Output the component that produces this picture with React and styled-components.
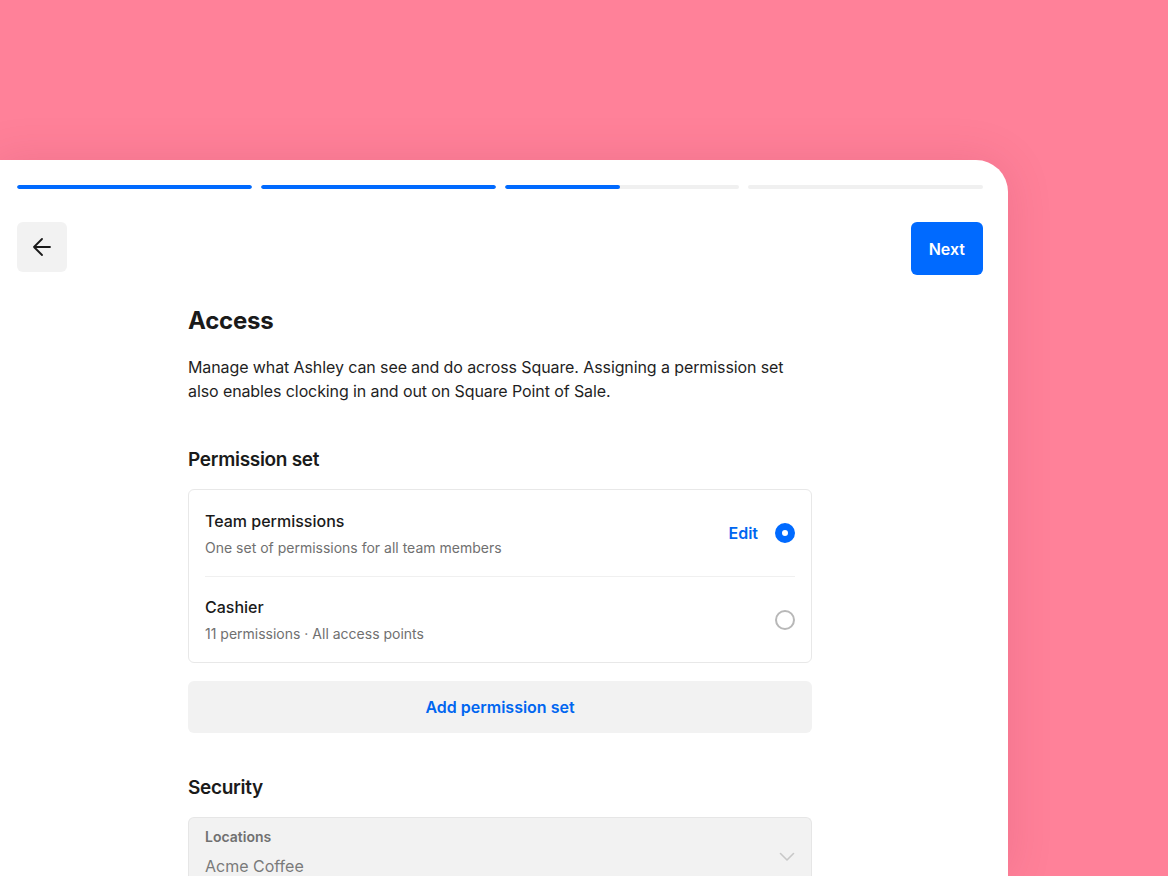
import React from 'react'
import styled, { createGlobalStyle } from 'styled-components'

const GlobalStyle = createGlobalStyle`
  html, body {
    margin: 0;
    padding: 0;
    height: 100%;
    overflow: hidden;
  }
  body {
    background: #ff8199;
    font-family: Inter, "Noto Sans", "Liberation Sans", sans-serif;
    color: #1a1a1a;
    -webkit-font-smoothing: antialiased;
  }
`

const Page = styled.div`
  height: 876px;
  padding-top: 160px;
  box-sizing: border-box;
  overflow: hidden;
`

const Sheet = styled.div`
  width: 1016px;
  height: 716px;
  margin-left: -8px;
  box-sizing: border-box;
  padding: 25px 25px 0;
  background: #fff;
  border-top-right-radius: 32px;
  box-shadow: 0 0 48px rgba(120, 20, 50, 0.12);
`

const Progress = styled.div`
  display: grid;
  grid-template-columns: repeat(4, 1fr);
  gap: 9px;
`

const Track = styled.div`
  height: 4px;
  border-radius: 2px;
  background: #f0f0f0;
  overflow: hidden;
`

const Fill = styled.div`
  height: 100%;
  border-radius: 2px;
  background: #006aff;
`

const Header = styled.div`
  display: flex;
  justify-content: space-between;
  align-items: flex-start;
  margin-top: 33px;
`

const BackButton = styled.button`
  width: 50px;
  height: 50px;
  border: 0;
  border-radius: 6px;
  background: #f2f2f2;
  display: flex;
  align-items: center;
  justify-content: center;
  padding: 0;
`

const NextButton = styled.button`
  height: 53px;
  padding: 0 18px;
  border: 0;
  border-radius: 6px;
  background: #006aff;
  color: #fff;
  font-family: inherit;
  font-size: 16px;
  font-weight: 600;
`

const Content = styled.div`
  width: 624px;
  margin: 30px auto 0;
`

const Title = styled.h1`
  margin: 0;
  font-size: 24px;
  line-height: 32px;
  font-weight: 700;
  letter-spacing: -0.2px;
`

const Lead = styled.p`
  margin: 18px 0 0;
  font-size: 16px;
  line-height: 24px;
  letter-spacing: -0.1px;
  color: #1f1f1f;
`

const SectionTitle = styled.h2`
  margin: ${p => p.$top}px 0 ${p => p.$bottom}px;
  font-size: 19px;
  line-height: 28px;
  font-weight: 600;
  letter-spacing: -0.3px;
`

const OptionList = styled.div`
  border: 1px solid #e8e8e8;
  border-radius: 6px;
  padding: 0 16px;
`

const Option = styled.div`
  display: flex;
  align-items: center;
  height: 86px;
  box-sizing: border-box;
  & + & {
    border-top: 1px solid #f0f0f0;
  }
`

const OptionText = styled.div`
  flex: 1;
`

const OptionName = styled.div`
  font-size: 16px;
  line-height: 24px;
  font-weight: 500;
`

const OptionMeta = styled.div`
  margin-top: 5px;
  font-size: 14px;
  line-height: 20px;
  color: #707070;
`

const EditLink = styled.span`
  margin-right: 17px;
  color: #0066f0;
  font-size: 16px;
  font-weight: 600;
`

const Radio = styled.span`
  width: 20px;
  height: 20px;
  border-radius: 50%;
  box-sizing: border-box;
  border: ${p => (p.$checked ? '7px solid #006aff' : '2px solid #b8b8b8')};
  background: #fff;
`

const AddButton = styled.button`
  display: block;
  width: 100%;
  height: 52px;
  margin-top: 18px;
  border: 0;
  border-radius: 6px;
  background: #f2f2f2;
  color: #0066f0;
  font-family: inherit;
  font-size: 16px;
  font-weight: 600;
`

const Field = styled.div`
  display: flex;
  align-items: center;
  height: 70px;
  padding: 9px 16px 0;
  box-sizing: border-box;
  background: #f2f2f2;
  border: 1px solid #e6e6e6;
  border-bottom: 0;
  border-radius: 6px 6px 0 0;
`

const FieldText = styled.div`
  flex: 1;
  align-self: flex-start;
`

const FieldLabel = styled.div`
  font-size: 14px;
  line-height: 20px;
  font-weight: 600;
  color: #707070;
`

const FieldValue = styled.div`
  margin-top: 9px;
  font-size: 16px;
  line-height: 20px;
  color: #7a7a7a;
`

const ArrowLeft = () => (
  <svg width="20" height="20" viewBox="0 0 20 20" fill="none">
    <path d="M2 10H18M2 10L10 2M2 10L10 18" stroke="#1a1a1a" strokeWidth="1.8" strokeLinecap="round" strokeLinejoin="round" />
  </svg>
)

const Chevron = () => (
  <svg width="16" height="10" viewBox="0 0 16 10" fill="none">
    <path d="M1.5 1.5L8 8L14.5 1.5" stroke="#c8c8c8" strokeWidth="1.6" strokeLinecap="round" strokeLinejoin="round" />
  </svg>
)

const steps = [1, 1, 0.49, 0]

const options = [
  { name: 'Team permissions', meta: 'One set of permissions for all team members', checked: true, editable: true },
  { name: 'Cashier', meta: '11 permissions · All access points', checked: false }
]

export default function App () {
  return (
    <Page>
      <GlobalStyle />
      <Sheet>
        <Progress>
          {steps.map((s, i) => (
            <Track key={i}>
              <Fill style={{ width: `${s * 100}%` }} />
            </Track>
          ))}
        </Progress>

        <Header>
          <BackButton aria-label="Back">
            <ArrowLeft />
          </BackButton>
          <NextButton>Next</NextButton>
        </Header>

        <Content>
          <Title>Access</Title>
          <Lead>
            Manage what Ashley can see and do across Square. Assigning a permission set
            also enables clocking in and out on Square Point of Sale.
          </Lead>

          <SectionTitle $top={43} $bottom={15}>Permission set</SectionTitle>
          <OptionList>
            {options.map(o => (
              <Option key={o.name}>
                <OptionText>
                  <OptionName>{o.name}</OptionName>
                  <OptionMeta>{o.meta}</OptionMeta>
                </OptionText>
                {o.editable && <EditLink>Edit</EditLink>}
                <Radio $checked={o.checked} />
              </Option>
            ))}
          </OptionList>
          <AddButton>Add permission set</AddButton>

          <SectionTitle $top={41} $bottom={15}>Security</SectionTitle>
          <Field>
            <FieldText>
              <FieldLabel>Locations</FieldLabel>
              <FieldValue>Acme Coffee</FieldValue>
            </FieldText>
            <Chevron />
          </Field>
        </Content>
      </Sheet>
    </Page>
  )
}
